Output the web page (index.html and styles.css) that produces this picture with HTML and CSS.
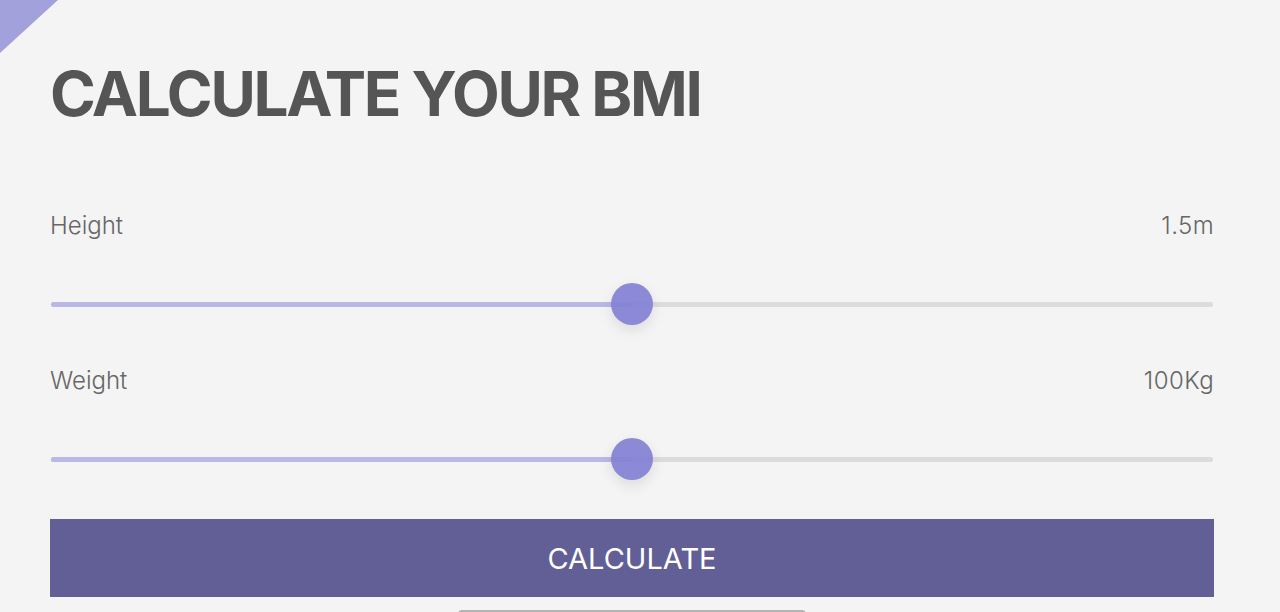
FILE: index.html
```html
<!DOCTYPE html>
<html lang="en">
<head>
<meta charset="utf-8">
<title>BMI Calculator</title>
<link rel="stylesheet" href="styles.css">
</head>
<body>
<div class="corner"></div>
<main class="page">
  <h1 class="title">CALCULATE YOUR BMI</h1>

  <section class="field">
    <div class="field-head">
      <span class="label">Height</span>
      <span class="value">1.5m</span>
    </div>
    <div class="slider">
      <div class="track">
        <div class="fill" style="width: 50%"></div>
        <div class="thumb" style="left: 50%"></div>
      </div>
    </div>
  </section>

  <section class="field">
    <div class="field-head">
      <span class="label">Weight</span>
      <span class="value">100Kg</span>
    </div>
    <div class="slider">
      <div class="track">
        <div class="fill" style="width: 50%"></div>
        <div class="thumb" style="left: 50%"></div>
      </div>
    </div>
  </section>

  <button class="calc-btn" type="button">CALCULATE</button>

  <div class="result-peek"></div>
</main>
</body>
</html>
```

FILE: styles.css
```css
html, body {
  margin: 0;
  padding: 0;
}

body {
  background: #f4f4f4;
  font-family: Inter, "Noto Sans", "Liberation Sans", sans-serif;
  overflow: hidden;
  height: 612px;
}

.corner {
  position: absolute;
  top: 0;
  left: 0;
  width: 58px;
  height: 53px;
  background: #a3a1dc;
  clip-path: polygon(0 0, 100% 0, 0 100%);
}

.page {
  padding: 56px 66px 0 50px;
  display: flex;
  flex-direction: column;
}

.title {
  margin: 0 0 79px 0;
  font-size: 62px;
  line-height: 76px;
  font-weight: 700;
  color: #555555;
  letter-spacing: -2.3px;
}

.field {
  display: flex;
  flex-direction: column;
  margin-bottom: 41px;
}

.field:last-of-type {
  margin-bottom: 39px;
}

.field-head {
  display: flex;
  justify-content: space-between;
  align-items: baseline;
  font-size: 24px;
  line-height: 30px;
  font-weight: 300;
  color: #666666;
}

.value {
  letter-spacing: 0.4px;
}

.slider {
  margin-top: 42px;
  height: 42px;
  display: flex;
  align-items: center;
  padding: 0 1px;
}

.track {
  position: relative;
  flex: 1;
  height: 5px;
  border-radius: 3px;
  background: #dcdcdc;
}

.fill {
  height: 100%;
  border-radius: 3px;
  background: #b9b8e7;
}

.thumb {
  position: absolute;
  top: 50%;
  width: 42px;
  height: 42px;
  margin: -21px 0 0 -21px;
  border-radius: 50%;
  background: rgba(130, 128, 210, 0.92);
  box-shadow: 0 5px 14px rgba(0, 0, 0, 0.1);
}

.calc-btn {
  height: 78px;
  border: 0;
  padding: 0;
  background: #625f97;
  color: #ffffff;
  font-family: inherit;
  font-size: 29px;
  font-weight: 400;
  letter-spacing: 0;
}

.result-peek {
  align-self: center;
  width: 348px;
  height: 10px;
  margin-top: 13px;
  border-top: 2px solid #b4b4b4;
  border-radius: 4px 4px 0 0;
}
```
